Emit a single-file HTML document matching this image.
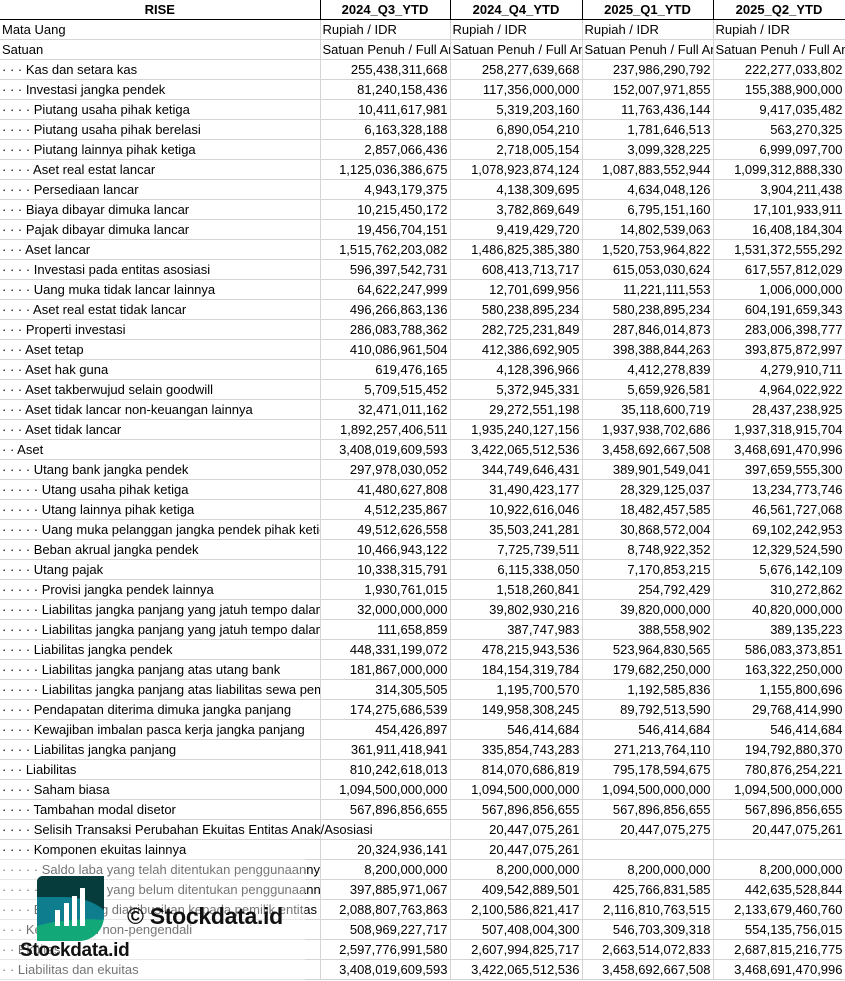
<!DOCTYPE html>
<html><head><meta charset="utf-8"><style>
body{margin:0;width:845px;height:981px;overflow:hidden;background:#fff;font-family:"Liberation Sans",Arial,sans-serif;font-size:13px;color:#000;position:relative}
table{border-collapse:collapse;table-layout:fixed;position:absolute;left:0;top:0;width:845px}
td{height:19px;padding:0 2px;border-right:1px solid #d4d4d4;border-bottom:1px solid #d4d4d4;white-space:nowrap;overflow:hidden;line-height:19px}
td.n{text-align:right}
tr.h td{font-weight:bold;text-align:center;border-right:1px solid #000;border-bottom:1px solid #000}
td.ov{overflow:visible;position:relative;z-index:2}
</style></head><body>
<table>
<colgroup><col style="width:320px"><col style="width:130px"><col style="width:132px"><col style="width:131px"><col style="width:132px"></colgroup>
<tr class="h"><td>RISE</td><td>2024_Q3_YTD</td><td>2024_Q4_YTD</td><td>2025_Q1_YTD</td><td>2025_Q2_YTD</td></tr>
<tr><td>Mata Uang</td><td>Rupiah / IDR</td><td>Rupiah / IDR</td><td>Rupiah / IDR</td><td>Rupiah / IDR</td></tr>
<tr><td>Satuan</td><td>Satuan Penuh / Full Amount</td><td>Satuan Penuh / Full Amount</td><td>Satuan Penuh / Full Amount</td><td>Satuan Penuh / Full Amount</td></tr>
<tr><td>· · · Kas dan setara kas</td><td class="n">255,438,311,668</td><td class="n">258,277,639,668</td><td class="n">237,986,290,792</td><td class="n">222,277,033,802</td></tr>
<tr><td>· · · Investasi jangka pendek</td><td class="n">81,240,158,436</td><td class="n">117,356,000,000</td><td class="n">152,007,971,855</td><td class="n">155,388,900,000</td></tr>
<tr><td>· · · · Piutang usaha pihak ketiga</td><td class="n">10,411,617,981</td><td class="n">5,319,203,160</td><td class="n">11,763,436,144</td><td class="n">9,417,035,482</td></tr>
<tr><td>· · · · Piutang usaha pihak berelasi</td><td class="n">6,163,328,188</td><td class="n">6,890,054,210</td><td class="n">1,781,646,513</td><td class="n">563,270,325</td></tr>
<tr><td>· · · · Piutang lainnya pihak ketiga</td><td class="n">2,857,066,436</td><td class="n">2,718,005,154</td><td class="n">3,099,328,225</td><td class="n">6,999,097,700</td></tr>
<tr><td>· · · · Aset real estat lancar</td><td class="n">1,125,036,386,675</td><td class="n">1,078,923,874,124</td><td class="n">1,087,883,552,944</td><td class="n">1,099,312,888,330</td></tr>
<tr><td>· · · · Persediaan lancar</td><td class="n">4,943,179,375</td><td class="n">4,138,309,695</td><td class="n">4,634,048,126</td><td class="n">3,904,211,438</td></tr>
<tr><td>· · · Biaya dibayar dimuka lancar</td><td class="n">10,215,450,172</td><td class="n">3,782,869,649</td><td class="n">6,795,151,160</td><td class="n">17,101,933,911</td></tr>
<tr><td>· · · Pajak dibayar dimuka lancar</td><td class="n">19,456,704,151</td><td class="n">9,419,429,720</td><td class="n">14,802,539,063</td><td class="n">16,408,184,304</td></tr>
<tr><td>· · · Aset lancar</td><td class="n">1,515,762,203,082</td><td class="n">1,486,825,385,380</td><td class="n">1,520,753,964,822</td><td class="n">1,531,372,555,292</td></tr>
<tr><td>· · · · Investasi pada entitas asosiasi</td><td class="n">596,397,542,731</td><td class="n">608,413,713,717</td><td class="n">615,053,030,624</td><td class="n">617,557,812,029</td></tr>
<tr><td>· · · · Uang muka tidak lancar lainnya</td><td class="n">64,622,247,999</td><td class="n">12,701,699,956</td><td class="n">11,221,111,553</td><td class="n">1,006,000,000</td></tr>
<tr><td>· · · · Aset real estat tidak lancar</td><td class="n">496,266,863,136</td><td class="n">580,238,895,234</td><td class="n">580,238,895,234</td><td class="n">604,191,659,343</td></tr>
<tr><td>· · · Properti investasi</td><td class="n">286,083,788,362</td><td class="n">282,725,231,849</td><td class="n">287,846,014,873</td><td class="n">283,006,398,777</td></tr>
<tr><td>· · · Aset tetap</td><td class="n">410,086,961,504</td><td class="n">412,386,692,905</td><td class="n">398,388,844,263</td><td class="n">393,875,872,997</td></tr>
<tr><td>· · · Aset hak guna</td><td class="n">619,476,165</td><td class="n">4,128,396,966</td><td class="n">4,412,278,839</td><td class="n">4,279,910,711</td></tr>
<tr><td>· · · Aset takberwujud selain goodwill</td><td class="n">5,709,515,452</td><td class="n">5,372,945,331</td><td class="n">5,659,926,581</td><td class="n">4,964,022,922</td></tr>
<tr><td>· · · Aset tidak lancar non-keuangan lainnya</td><td class="n">32,471,011,162</td><td class="n">29,272,551,198</td><td class="n">35,118,600,719</td><td class="n">28,437,238,925</td></tr>
<tr><td>· · · Aset tidak lancar</td><td class="n">1,892,257,406,511</td><td class="n">1,935,240,127,156</td><td class="n">1,937,938,702,686</td><td class="n">1,937,318,915,704</td></tr>
<tr><td>· · Aset</td><td class="n">3,408,019,609,593</td><td class="n">3,422,065,512,536</td><td class="n">3,458,692,667,508</td><td class="n">3,468,691,470,996</td></tr>
<tr><td>· · · · Utang bank jangka pendek</td><td class="n">297,978,030,052</td><td class="n">344,749,646,431</td><td class="n">389,901,549,041</td><td class="n">397,659,555,300</td></tr>
<tr><td>· · · · · Utang usaha pihak ketiga</td><td class="n">41,480,627,808</td><td class="n">31,490,423,177</td><td class="n">28,329,125,037</td><td class="n">13,234,773,746</td></tr>
<tr><td>· · · · · Utang lainnya pihak ketiga</td><td class="n">4,512,235,867</td><td class="n">10,922,616,046</td><td class="n">18,482,457,585</td><td class="n">46,561,727,068</td></tr>
<tr><td>· · · · · Uang muka pelanggan jangka pendek pihak ketiga</td><td class="n">49,512,626,558</td><td class="n">35,503,241,281</td><td class="n">30,868,572,004</td><td class="n">69,102,242,953</td></tr>
<tr><td>· · · · Beban akrual jangka pendek</td><td class="n">10,466,943,122</td><td class="n">7,725,739,511</td><td class="n">8,748,922,352</td><td class="n">12,329,524,590</td></tr>
<tr><td>· · · · Utang pajak</td><td class="n">10,338,315,791</td><td class="n">6,115,338,050</td><td class="n">7,170,853,215</td><td class="n">5,676,142,109</td></tr>
<tr><td>· · · · · Provisi jangka pendek lainnya</td><td class="n">1,930,761,015</td><td class="n">1,518,260,841</td><td class="n">254,792,429</td><td class="n">310,272,862</td></tr>
<tr><td>· · · · · Liabilitas jangka panjang yang jatuh tempo dalam satu tahun</td><td class="n">32,000,000,000</td><td class="n">39,802,930,216</td><td class="n">39,820,000,000</td><td class="n">40,820,000,000</td></tr>
<tr><td>· · · · · Liabilitas jangka panjang yang jatuh tempo dalam satu tahun</td><td class="n">111,658,859</td><td class="n">387,747,983</td><td class="n">388,558,902</td><td class="n">389,135,223</td></tr>
<tr><td>· · · · Liabilitas jangka pendek</td><td class="n">448,331,199,072</td><td class="n">478,215,943,536</td><td class="n">523,964,830,565</td><td class="n">586,083,373,851</td></tr>
<tr><td>· · · · · Liabilitas jangka panjang atas utang bank</td><td class="n">181,867,000,000</td><td class="n">184,154,319,784</td><td class="n">179,682,250,000</td><td class="n">163,322,250,000</td></tr>
<tr><td>· · · · · Liabilitas jangka panjang atas liabilitas sewa pembiayaan</td><td class="n">314,305,505</td><td class="n">1,195,700,570</td><td class="n">1,192,585,836</td><td class="n">1,155,800,696</td></tr>
<tr><td>· · · · Pendapatan diterima dimuka jangka panjang</td><td class="n">174,275,686,539</td><td class="n">149,958,308,245</td><td class="n">89,792,513,590</td><td class="n">29,768,414,990</td></tr>
<tr><td>· · · · Kewajiban imbalan pasca kerja jangka panjang</td><td class="n">454,426,897</td><td class="n">546,414,684</td><td class="n">546,414,684</td><td class="n">546,414,684</td></tr>
<tr><td>· · · · Liabilitas jangka panjang</td><td class="n">361,911,418,941</td><td class="n">335,854,743,283</td><td class="n">271,213,764,110</td><td class="n">194,792,880,370</td></tr>
<tr><td>· · · Liabilitas</td><td class="n">810,242,618,013</td><td class="n">814,070,686,819</td><td class="n">795,178,594,675</td><td class="n">780,876,254,221</td></tr>
<tr><td>· · · · Saham biasa</td><td class="n">1,094,500,000,000</td><td class="n">1,094,500,000,000</td><td class="n">1,094,500,000,000</td><td class="n">1,094,500,000,000</td></tr>
<tr><td>· · · · Tambahan modal disetor</td><td class="n">567,896,856,655</td><td class="n">567,896,856,655</td><td class="n">567,896,856,655</td><td class="n">567,896,856,655</td></tr>
<tr><td class="ov">· · · · Selisih Transaksi Perubahan Ekuitas Entitas Anak/Asosiasi</td><td class="n"></td><td class="n">20,447,075,261</td><td class="n">20,447,075,275</td><td class="n">20,447,075,261</td></tr>
<tr><td>· · · · Komponen ekuitas lainnya</td><td class="n">20,324,936,141</td><td class="n">20,447,075,261</td><td class="n"></td><td class="n"></td></tr>
<tr><td>· · · · · Saldo laba yang telah ditentukan penggunaannya</td><td class="n">8,200,000,000</td><td class="n">8,200,000,000</td><td class="n">8,200,000,000</td><td class="n">8,200,000,000</td></tr>
<tr><td>· · · · · Saldo laba yang belum ditentukan penggunaannya</td><td class="n">397,885,971,067</td><td class="n">409,542,889,501</td><td class="n">425,766,831,585</td><td class="n">442,635,528,844</td></tr>
<tr><td>· · · · Ekuitas yang diatribusikan kepada pemilik entitas induk</td><td class="n">2,088,807,763,863</td><td class="n">2,100,586,821,417</td><td class="n">2,116,810,763,515</td><td class="n">2,133,679,460,760</td></tr>
<tr><td>· · · Kepentingan non-pengendali</td><td class="n">508,969,227,717</td><td class="n">507,408,004,300</td><td class="n">546,703,309,318</td><td class="n">554,135,756,015</td></tr>
<tr><td>· · Ekuitas</td><td class="n">2,597,776,991,580</td><td class="n">2,607,994,825,717</td><td class="n">2,663,514,072,833</td><td class="n">2,687,815,216,775</td></tr>
<tr><td>· · Liabilitas dan ekuitas</td><td class="n">3,408,019,609,593</td><td class="n">3,422,065,512,536</td><td class="n">3,458,692,667,508</td><td class="n">3,468,691,470,996</td></tr>
</table>
<div style="position:absolute;left:0;top:859px;width:305px;height:122px;background:rgba(255,255,255,0.45);z-index:3"></div>
<svg style="position:absolute;left:37px;top:876px;z-index:4" width="67" height="65" viewBox="0 0 67 65">
<defs><clipPath id="c"><path d="M6 0H67V40A25 25 0 0 1 42 65H0V6A6 6 0 0 1 6 0Z"/></clipPath></defs>
<g clip-path="url(#c)">
<rect width="67" height="65" fill="#12a878"/>
<path d="M0 0H67V44C50 42 20 44 0 50Z" fill="#0e7e8e"/>
<path d="M0 0H67V34C55 24 40 21 25 21H0Z" fill="#063c3c"/>
<rect x="18" y="34" width="5" height="16" fill="#fff"/>
<rect x="27" y="27" width="5" height="23" fill="#fff"/>
<rect x="35" y="20" width="5" height="30" fill="#fff"/>
<rect x="43" y="12" width="5" height="38" fill="#fff"/>
</g></svg>
<div style="position:absolute;left:127px;top:903px;z-index:4;font-weight:bold;font-size:23px;color:#111;letter-spacing:-0.3px">© Stockdata.id</div>
<div style="position:absolute;left:20px;top:940px;z-index:4;font-weight:bold;font-size:19px;color:#111;letter-spacing:-0.3px">Stockdata.id</div>
</body></html>
